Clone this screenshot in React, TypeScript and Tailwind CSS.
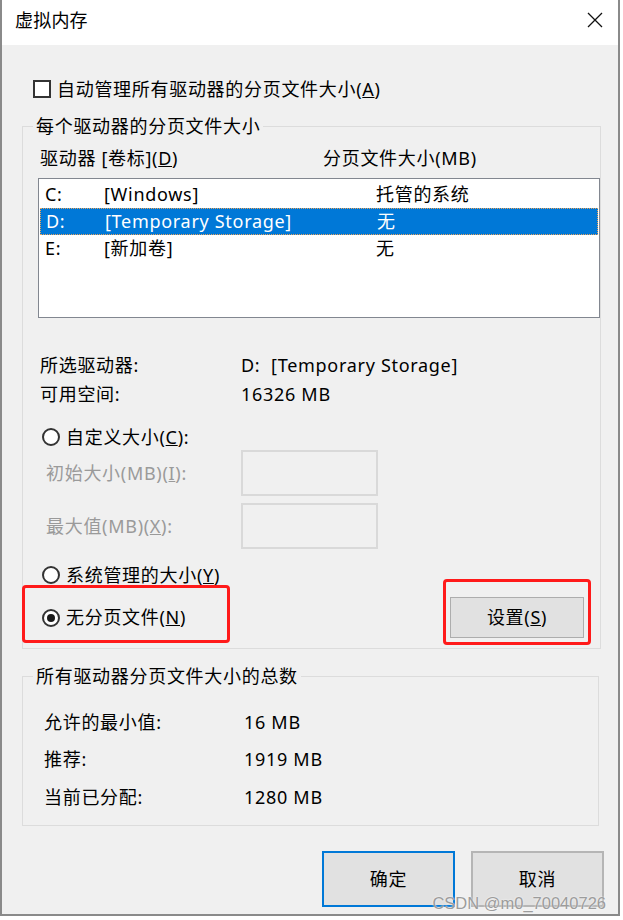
import React from "react";

const FONT = "[font-family:'Noto_Sans','Noto_Sans_CJK_SC',sans-serif]";

function Radio({ checked }: { checked?: boolean }) {
  return (
    <span className="w-[18px] h-[18px] rounded-full border-2 border-[#333] bg-white flex items-center justify-center shrink-0">
      {checked && <span className="w-[8px] h-[8px] rounded-full bg-[#1a1a1a]" />}
    </span>
  );
}

const drives = [
  { d: "C:", label: "[Windows]", size: "托管的系统" },
  { d: "D:", label: "[Temporary Storage]", size: "无", sel: true },
  { d: "E:", label: "[新加卷]", size: "无" },
];

export default function App() {
  return (
    <div className={`w-[623px] h-[920px] bg-white text-[18px] text-black tracking-[0.7px] ${FONT}`}>
      <div className="relative w-[620px] h-[916px] border-x-2 border-b-2 border-[#8a8a8a] bg-[#f0f0f0] flex flex-col">
        {/* title bar */}
        <div className="h-[45px] bg-white flex items-center justify-between pl-[13px] pr-[15px] pb-[5px]">
          <span className="leading-[24px] tracking-[0.2px]">虚拟内存</span>
          <svg width="16" height="16" viewBox="0 0 16 16">
            <path d="M1 1L15 15M15 1L1 15" stroke="#111" strokeWidth="1.3" />
          </svg>
        </div>

        {/* auto manage */}
        <div className="mt-[32px] ml-[31px] h-[24px] flex items-center gap-[6px]">
          <span className="w-[18px] h-[18px] border-2 border-[#333] bg-white" />
          <span className="leading-[24px]">
            自动管理所有驱动器的分页文件大小(<u>A</u>)
          </span>
        </div>

        {/* per-drive group */}
        <fieldset className="mt-[13px] ml-[20px] w-[577px] border border-[#dcdcdc] pb-[10px]">
          <legend className="ml-[10px] px-[3px] leading-[24px]">每个驱动器的分页文件大小</legend>
          <div className="pl-[15px]">
            <div className="mt-[8px] h-[24px] flex items-center pl-[2px]">
              <span className="w-[283px]">
                驱动器 [卷标](<u>D</u>)
              </span>
              <span>分页文件大小(MB)</span>
            </div>

            <div className="mt-[8px] w-[562px] h-[140px] border border-[#828790] bg-white pt-[2px] px-[1px]">
              {drives.map((r) => (
                <div
                  key={r.d}
                  className={`h-[27px] flex items-center pl-[5px] ${
                    r.sel ? "bg-[#0078d7] text-white border border-dotted border-[#e8a35c]" : ""
                  }`}
                >
                  <span className="w-[59px]">{r.d}</span>
                  <span className="w-[272px]">{r.label}</span>
                  <span>{r.size}</span>
                </div>
              ))}
            </div>

            <div className="mt-[35px] h-[24px] flex items-center pl-[2px]">
              <span className="w-[201px]">所选驱动器:</span>
              <span>D:&nbsp;&nbsp;[Temporary Storage]</span>
            </div>
            <div className="mt-[5px] h-[24px] flex items-center pl-[2px]">
              <span className="w-[201px]">可用空间:</span>
              <span>16326 MB</span>
            </div>

            <div className="mt-[19px] h-[24px] flex items-center gap-[6px] ml-[4px]">
              <Radio />
              <span>
                自定义大小(<u>C</u>):
              </span>
            </div>

            <div className="mt-[1px] h-[46px] flex items-center text-[#9a9a9a]">
              <span className="w-[203px] pl-[8px]">
                初始大小(MB)(<u>I</u>):
              </span>
              <span className="w-[137px] h-[46px] border-2 border-[#d9d9d9]" />
            </div>
            <div className="mt-[7px] h-[46px] flex items-center text-[#9a9a9a]">
              <span className="w-[203px] pl-[8px]">
                最大值(MB)(<u>X</u>):
              </span>
              <span className="w-[137px] h-[46px] border-2 border-[#d9d9d9]" />
            </div>

            <div className="mt-[14px] h-[24px] flex items-center gap-[6px] ml-[4px]">
              <Radio />
              <span>
                系统管理的大小(<u>Y</u>)
              </span>
            </div>

            <div className="mt-[10px] h-[41px] flex items-center justify-between">
              <div className="flex items-center gap-[6px] ml-[4px]">
                <Radio checked />
                <span>
                  无分页文件(<u>N</u>)
                </span>
              </div>
              <button className="mr-[16px] w-[134px] h-[41px] border border-[#adadad] bg-[#e1e1e1] flex items-center justify-center">
                设置(<u>S</u>)
              </button>
            </div>
          </div>
        </fieldset>

        {/* totals group */}
        <fieldset className="mt-[15px] ml-[20px] w-[577px] border border-[#dcdcdc] pb-[16px]">
          <legend className="ml-[10px] px-[3px] leading-[24px]">所有驱动器分页文件大小的总数</legend>
          <div className="pl-[21px]">
            <div className="mt-[22px] h-[24px] flex items-center">
              <span className="w-[200px]">允许的最小值:</span>
              <span>16 MB</span>
            </div>
            <div className="mt-[13px] h-[24px] flex items-center">
              <span className="w-[200px]">推荐:</span>
              <span>1919 MB</span>
            </div>
            <div className="mt-[14px] h-[24px] flex items-center">
              <span className="w-[200px]">当前已分配:</span>
              <span>1280 MB</span>
            </div>
          </div>
        </fieldset>

        {/* dialog buttons */}
        <div className="mt-[25px] pr-[14px] flex justify-end gap-[16px]">
          <button className="w-[133px] h-[56px] border-2 border-[#0078d7] bg-[#e1e1e1] flex items-center justify-center">
            确定
          </button>
          <button className="w-[133px] h-[56px] border-2 border-[#b5b5b5] bg-[#e1e1e1] flex items-center justify-center">
            取消
          </button>
        </div>

        {/* annotation boxes */}
        <div className="absolute left-[20px] top-[585px] w-[208px] h-[58px] border-[3px] border-[#ff1a1a] rounded-[4px]" />
        <div className="absolute left-[441px] top-[579px] w-[148px] h-[66px] border-[3px] border-[#ff1a1a] rounded-[4px]" />

        {/* watermark */}
        <div className="absolute right-[12px] top-[893px] leading-[20px] text-[16.5px] tracking-normal text-[#9c9c9c] [font-family:'Liberation_Sans',sans-serif] [text-shadow:0_0_2px_#fff]">
          CSDN @m0_70040726
        </div>
      </div>
    </div>
  );
}
